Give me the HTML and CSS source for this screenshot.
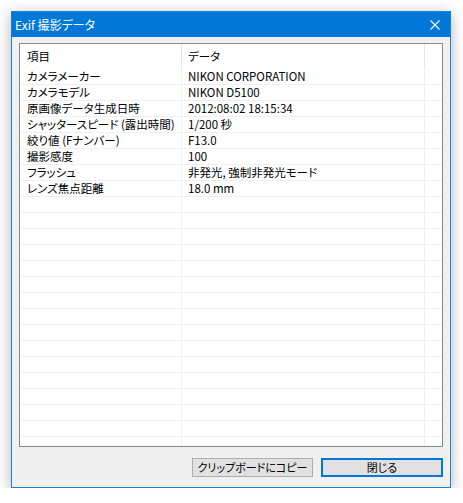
FILE: index.html
```html
<!DOCTYPE html>
<html lang="ja">
<head>
<meta charset="utf-8">
<link rel="stylesheet" href="styles.css">
</head>
<body>
<div class="window">
  <div class="titlebar">
    <span class="title">Exif 撮影データ</span>
    <svg class="close" width="10" height="10" viewBox="0 0 10 10"><path d="M0.5 0.5 L9.5 9.5 M9.5 0.5 L0.5 9.5" stroke="#fff" stroke-width="1.1" fill="none"/></svg>
  </div>
  <div class="content">
    <div class="list">
      <div class="row head"><div class="c1">項目</div><div class="c2">データ</div><div class="c3"></div></div>
      <div class="row"><div class="c1">カメラメーカー</div><div class="c2">NIKON CORPORATION</div><div class="c3"></div></div>
      <div class="row"><div class="c1">カメラモデル</div><div class="c2">NIKON D5100</div><div class="c3"></div></div>
      <div class="row"><div class="c1">原画像データ生成日時</div><div class="c2">2012:08:02 18:15:34</div><div class="c3"></div></div>
      <div class="row"><div class="c1">シャッタースピード (露出時間)</div><div class="c2">1/200 秒</div><div class="c3"></div></div>
      <div class="row"><div class="c1">絞り値 (Fナンバー)</div><div class="c2">F13.0</div><div class="c3"></div></div>
      <div class="row"><div class="c1">撮影感度</div><div class="c2">100</div><div class="c3"></div></div>
      <div class="row"><div class="c1">フラッシュ</div><div class="c2">非発光, 強制非発光モード</div><div class="c3"></div></div>
      <div class="row"><div class="c1">レンズ焦点距離</div><div class="c2">18.0 mm</div><div class="c3"></div></div>
      <div class="row"><div class="c1"></div><div class="c2"></div><div class="c3"></div></div>
      <div class="row"><div class="c1"></div><div class="c2"></div><div class="c3"></div></div>
      <div class="row"><div class="c1"></div><div class="c2"></div><div class="c3"></div></div>
      <div class="row"><div class="c1"></div><div class="c2"></div><div class="c3"></div></div>
      <div class="row"><div class="c1"></div><div class="c2"></div><div class="c3"></div></div>
      <div class="row"><div class="c1"></div><div class="c2"></div><div class="c3"></div></div>
      <div class="row"><div class="c1"></div><div class="c2"></div><div class="c3"></div></div>
      <div class="row"><div class="c1"></div><div class="c2"></div><div class="c3"></div></div>
      <div class="row"><div class="c1"></div><div class="c2"></div><div class="c3"></div></div>
      <div class="row"><div class="c1"></div><div class="c2"></div><div class="c3"></div></div>
      <div class="row"><div class="c1"></div><div class="c2"></div><div class="c3"></div></div>
      <div class="row"><div class="c1"></div><div class="c2"></div><div class="c3"></div></div>
      <div class="row"><div class="c1"></div><div class="c2"></div><div class="c3"></div></div>
      <div class="row"><div class="c1"></div><div class="c2"></div><div class="c3"></div></div>
      <div class="row"><div class="c1"></div><div class="c2"></div><div class="c3"></div></div>
      <div class="row"><div class="c1"></div><div class="c2"></div><div class="c3"></div></div>
    </div>
    <div class="buttons">
      <button class="btn">クリップボードにコピー</button>
      <button class="btn primary">閉じる</button>
    </div>
  </div>
</div>
</body>
</html>
```

FILE: styles.css
```css
html, body {
  margin: 0;
  padding: 0;
  background: #ffffff;
}
body {
  font-family: "Noto Sans CJK JP", sans-serif;
  font-size: 11px;
  color: #000;
  padding: 11px 0 0 11px;
}
.window {
  box-sizing: border-box;
  width: 440px;
  height: 477px;
  border: 1px solid #1a80d8;
  background: #f0f0f0;
  box-shadow: 0 3px 14px rgba(0, 0, 0, 0.3);
  display: flex;
  flex-direction: column;
}
.titlebar {
  height: 25px;
  background: #0078d7;
  display: flex;
  align-items: center;
  justify-content: space-between;
  padding: 0 10px 0 3px;
  flex: none;
}
.title {
  color: #fff;
  font-size: 12px;
  font-feature-settings: "palt";
  line-height: 25px;
}
.close {
  display: block;
}
.content {
  flex: 1;
  box-sizing: border-box;
  padding: 6px 7px 10px 7px;
  display: flex;
  flex-direction: column;
}
.list {
  flex: none;
  box-sizing: border-box;
  height: 404px;
  border: 1px solid #828790;
  background: #fff;
  overflow: hidden;
}
.row {
  display: flex;
  height: 15px;
  border-bottom: 1px solid #f0f0f0;
  line-height: 15px;
  font-size: 11.5px;
}
.row.head {
  height: 25px;
  line-height: 24px;
  border-bottom: none;
}
.row.head .c1,
.row.head .c2 {
  border-right-color: #e5e5e5;
}
.c1, .c2, .c3 {
  white-space: nowrap;
  overflow: hidden;
}
.c1 {
  width: 154px;
  padding-left: 7px;
  border-right: 1px solid #f0f0f0;
  font-feature-settings: "palt";
}
.c2 {
  width: 236px;
  padding-left: 6px;
  border-right: 1px solid #f0f0f0;
  font-feature-settings: "palt";
}
.c3 {
  width: 17px;
}
.buttons {
  flex: none;
  display: flex;
  justify-content: flex-end;
  gap: 8px;
  margin-top: auto;
}
.btn {
  box-sizing: border-box;
  font-family: "Noto Sans CJK JP", sans-serif;
  font-feature-settings: "palt";
  font-size: 11px;
  white-space: nowrap;
  height: 19px;
  padding: 0;
  line-height: 15px;
  background: #e1e1e1;
  border: 1px solid #adadad;
  color: #000;
  width: 121px;
  margin: 0;
}
.btn.primary {
  width: 122px;
  border: 2px solid #0078d7;
}
```
